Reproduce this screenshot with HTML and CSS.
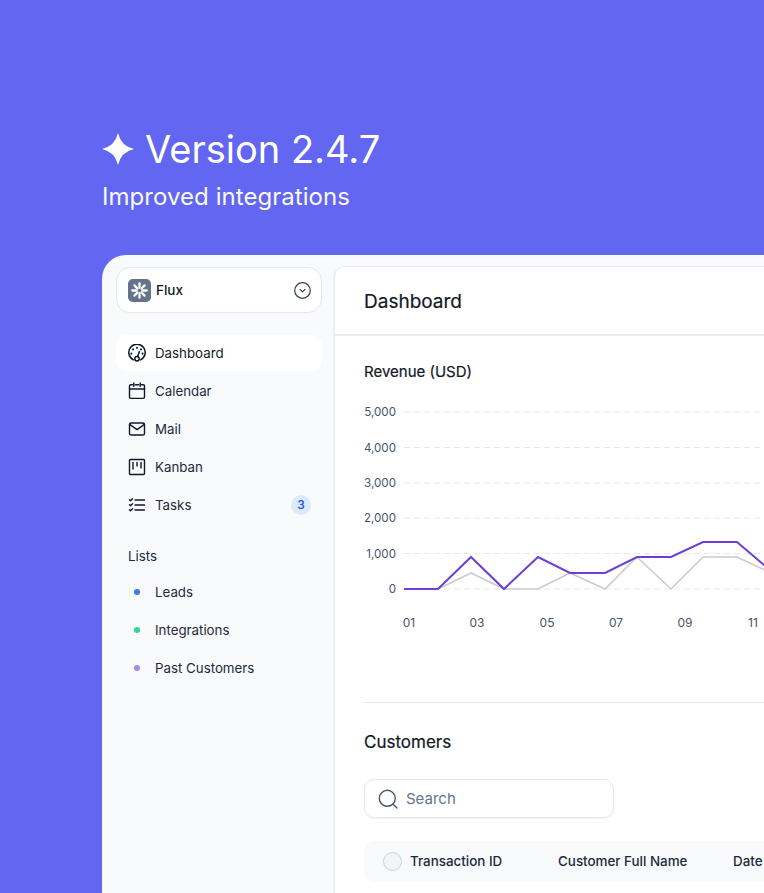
FILE: index.html
```html
<!DOCTYPE html>
<html>
<head>
  <title>Version 2.4.7</title>
  <link rel="stylesheet" href="styles.css">
</head>
<body>
  <header class="hero">
    <h1 class="hero-title">
      <svg class="hero-star" viewBox="0 0 32 32"><path d="M16 0Q19 13 32 16Q19 19 16 32Q13 19 0 16Q13 13 16 0Z" fill="#fff"/></svg>
      Version 2.4.7
    </h1>
    <p class="hero-sub">Improved integrations</p>
  </header>

  <div class="window">
    <aside class="sidebar">
      <div class="workspace">
        <span class="workspace-logo">
          <svg viewBox="0 0 24 24" width="23" height="23"><rect width="24" height="24" rx="5" fill="#64748b"/><g stroke="#fff" stroke-width="2.4" stroke-linecap="round"><path d="M12 4.5V9"/><path d="M12 15v4.5"/><path d="M4.5 12H9"/><path d="M15 12h4.5"/><path d="M6.7 6.7l3.2 3.2"/><path d="M14.1 14.1l3.2 3.2"/><path d="M17.3 6.7l-3.2 3.2"/><path d="M9.9 14.1l-3.2 3.2"/></g></svg>
        </span>
        <span class="workspace-name">Flux</span>
        <svg class="workspace-arrow" viewBox="0 0 17 17" width="17" height="17" fill="none" stroke="#374151" stroke-width="1.2" stroke-linecap="round" stroke-linejoin="round"><circle cx="8.5" cy="8.5" r="7.8"/><path d="M6 7.4l2.5 2.5L11 7.4"/></svg>
      </div>

      <nav class="nav">
        <a class="nav-item active">
          <svg class="nav-icon" viewBox="0 0 18 18" fill="none" stroke="#111827" stroke-width="1.5" stroke-linecap="round" stroke-linejoin="round"><path d="M5.4 15.8A8.2 8.2 0 1 1 12.6 15.8"/><circle cx="9" cy="14.8" r="2.2"/><path d="M9.6 12.6L11.4 7.6"/><path d="M9 3.6v.3" stroke-width="1.9"/><path d="M5.1 5.2v.3" stroke-width="1.9"/><path d="M12.9 5.2v.3" stroke-width="1.9"/><path d="M3.4 9.4v.3" stroke-width="1.9"/><path d="M14.6 9.4v.3" stroke-width="1.9"/></svg>
          Dashboard
        </a>
        <a class="nav-item">
          <svg class="nav-icon" viewBox="0 0 18 18" fill="none" stroke="#111827" stroke-width="1.4" stroke-linecap="round" stroke-linejoin="round"><path d="M4.5 2.8H2.8a1.3 1.3 0 0 0-1.3 1.3v11a1.3 1.3 0 0 0 1.3 1.3h12.4a1.3 1.3 0 0 0 1.3-1.3v-11a1.3 1.3 0 0 0-1.3-1.3h-1.7"/><path d="M7.3 2.8h3.4"/><path d="M5.8 1v3.4"/><path d="M12.2 1v3.4"/><path d="M1.5 7h15"/></svg>
          Calendar
        </a>
        <a class="nav-item">
          <svg class="nav-icon" viewBox="0 0 18 18" fill="none" stroke="#111827" stroke-width="1.4" stroke-linecap="round" stroke-linejoin="round"><rect x="1.5" y="3" width="15" height="12" rx="1.6"/><path d="M2 4.6L9 9.6L16 4.6"/></svg>
          Mail
        </a>
        <a class="nav-item">
          <svg class="nav-icon" viewBox="0 0 18 18" fill="none" stroke="#111827" stroke-width="1.4" stroke-linecap="round" stroke-linejoin="round"><rect x="1.5" y="1.5" width="15" height="15" rx="1"/><path d="M5 4.5v6.5"/><path d="M9 4.5v3.5"/><path d="M13 4.5v5.5"/></svg>
          Kanban
        </a>
        <a class="nav-item">
          <svg class="nav-icon" viewBox="0 0 18 18" fill="none" stroke="#111827" stroke-width="1.4" stroke-linecap="round" stroke-linejoin="round"><path d="M7 4h9.5"/><path d="M7 9h9.5"/><path d="M7 14h9.5"/><path d="M1.5 3.8l1 1L4.6 2.8"/><path d="M1.5 8.8l1 1l2.1-2"/><path d="M1.5 13.8l1 1l2.1-2"/></svg>
          Tasks
          <span class="badge">3</span>
        </a>
      </nav>

      <div class="list-title">Lists</div>
      <nav class="nav">
        <a class="nav-item"><span class="nav-dot"><i class="dot dot-blue"></i></span>Leads</a>
        <a class="nav-item"><span class="nav-dot"><i class="dot dot-green"></i></span>Integrations</a>
        <a class="nav-item"><span class="nav-dot"><i class="dot dot-purple"></i></span>Past Customers</a>
      </nav>
    </aside>

    <main class="panel">
      <div class="panel-header">Dashboard</div>

      <section class="panel-body">
        <h2 class="chart-title">Revenue (USD)</h2>
        <svg class="chart" width="400" height="245" viewBox="364 395 400 245">
          <g class="grid">
            <path d="M404 412H764"/>
            <path d="M404 447.5H764"/>
            <path d="M404 483H764"/>
            <path d="M404 518H764"/>
            <path d="M404 553.5H764"/>
            <path d="M404 589H764"/>
          </g>
          <g class="y-labels">
            <text x="396" y="416">5,000</text>
            <text x="396" y="452">4,000</text>
            <text x="396" y="487">3,000</text>
            <text x="396" y="522">2,000</text>
            <text x="396" y="558">1,000</text>
            <text x="396" y="593">0</text>
          </g>
          <g class="x-labels">
            <text x="409" y="627">01</text>
            <text x="477" y="627">03</text>
            <text x="547" y="627">05</text>
            <text x="616" y="627">07</text>
            <text x="685" y="627">09</text>
            <text x="753" y="627">11</text>
          </g>
          <polyline class="line-gray" points="438,589 471,573 504,589 538,589 570,573 605,589 637,557 671,589 703,557 737,557 771,573"/>
          <polyline class="line-purple" points="404,589 438,589 471,557 504,589 538,557 570,573 605,573 637,557 671,557 703,542 737,542 771,571"/>
        </svg>

        <div class="divider"></div>

        <h2 class="table-title">Customers</h2>
        <div class="search">
          <svg viewBox="0 0 20 20" width="20" height="20" fill="none" stroke="#475569" stroke-width="1.4" stroke-linecap="round"><circle cx="9.3" cy="9.3" r="8"/><path d="M15.2 15.2L19 19"/></svg>
          <span>Search</span>
        </div>
        <div class="table-head">
          <span class="checkbox"></span>
          <span class="col col-id">Transaction ID</span>
          <span class="col col-name">Customer Full Name</span>
          <span class="col">Date</span>
        </div>
      </section>
    </main>
  </div>
</body>
</html>
```

FILE: styles.css
```css
* {
  box-sizing: border-box;
}

html,
body {
  height: 100%;
}

body {
  margin: 0;
  overflow: hidden;
  font-family: Inter, "Noto Sans", sans-serif;
  background-color: #6366f1;
  color: #111827;
}

.hero {
  height: 255px;
  padding: 124px 0 0 102px;
  color: #fff;
}

.hero-title {
  display: flex;
  align-items: center;
  gap: 11px;
  margin: 0;
  height: 50px;
  font-size: 38px;
  font-weight: 400;
  line-height: 50px;
  white-space: nowrap;
}

.hero-star {
  width: 32px;
  height: 32px;
}

.hero-sub {
  margin: 6px 0 0;
  font-size: 24px;
  line-height: 34px;
  font-weight: 400;
  letter-spacing: 0.05px;
  opacity: 0.96;
}

.window {
  display: flex;
  width: 700px;
  height: 660px;
  margin-left: 102px;
  padding-top: 11px;
  background-color: #f8fafc;
  border-radius: 24px 0 0 0;
}

.sidebar {
  flex: none;
  width: 231px;
  padding: 1px 11px 0 14px;
}

.workspace {
  display: flex;
  align-items: center;
  height: 46px;
  padding: 0 10px 0 11px;
  background-color: #fff;
  border: 1px solid #e2e8f0;
  border-radius: 14px;
}

.workspace-logo {
  display: flex;
  margin-right: 5px;
}

.workspace-name {
  flex: 1;
  padding-bottom: 1px;
  font-size: 13.5px;
  font-weight: 500;
  color: #111827;
}

.nav {
  display: flex;
  flex-direction: column;
  gap: 2px;
}

.sidebar > .nav:first-of-type {
  margin-top: 22px;
}

.nav-item {
  display: flex;
  align-items: center;
  height: 36px;
  padding: 0 11px 1px 12px;
  border-radius: 10px;
  font-size: 13.3px;
  color: #1e293b;
}

.nav-item.active {
  background-color: #fff;
  color: #111827;
}

.nav-icon {
  flex: none;
  width: 18px;
  height: 18px;
  margin-right: 9px;
}

.nav-dot {
  flex: none;
  display: flex;
  justify-content: center;
  width: 18px;
  margin-right: 9px;
}

.dot {
  width: 6px;
  height: 6px;
  border-radius: 50%;
}

.dot-blue {
  background-color: #3b7be8;
}

.dot-green {
  background-color: #34d399;
}

.dot-purple {
  background-color: #a78bea;
}

.badge {
  width: 20px;
  height: 20px;
  margin-left: auto;
  border-radius: 50%;
  background-color: #dbeafe;
  color: #1d4ed8;
  font-size: 12px;
  font-weight: 500;
  line-height: 20px;
  text-align: center;
}

.list-title {
  margin: 25px 0 0 12px;
  height: 17px;
  font-size: 13.3px;
  line-height: 17px;
  color: #1e293b;
}

.list-title + .nav {
  margin-top: 9px;
}

.panel {
  flex: 1;
  background-color: #fff;
  border-top: 1px solid #e8eaee;
  border-left: 2px solid #eceef1;
  border-radius: 12px 0 0 0;
}

.panel-header {
  height: 69px;
  padding-left: 29px;
  border-bottom: 2px solid #eceef1;
  font-size: 19px;
  font-weight: 400;
  line-height: 69px;
  -webkit-text-stroke: 0.2px #111827;
  color: #111827;
}

.panel-body {
  padding-left: 29px;
}

.chart-title {
  margin: 0;
  padding-top: 27px;
  height: 59px;
  font-size: 15px;
  font-weight: 400;
  line-height: 18px;
  -webkit-text-stroke: 0.2px #111827;
  color: #111827;
}

.chart {
  display: block;
}

.grid path {
  stroke: #e2e8f0;
  stroke-width: 1;
  stroke-dasharray: 6 4;
  fill: none;
}

.y-labels text {
  font-size: 11.6px;
  fill: #475569;
  text-anchor: end;
}

.x-labels text {
  font-size: 12px;
  fill: #475569;
  text-anchor: middle;
}

.line-gray {
  fill: none;
  stroke: #c9cbd2;
  stroke-width: 1.6;
}

.line-purple {
  fill: none;
  stroke: #6d3fd9;
  stroke-width: 2;
}

.divider {
  margin-top: 62px;
  height: 1px;
  background-color: #e5e7eb;
}

.table-title {
  margin: 29px 0 0;
  height: 21px;
  font-size: 17px;
  font-weight: 400;
  line-height: 21px;
  -webkit-text-stroke: 0.2px #111827;
  color: #111827;
}

.search {
  display: flex;
  align-items: center;
  gap: 8px;
  width: 250px;
  height: 39px;
  margin-top: 26px;
  padding: 0 13px;
  background-color: #fff;
  border: 1px solid #e2e8f0;
  border-radius: 10px;
  box-shadow: 0 1px 2px rgba(0, 0, 0, 0.05);
  font-size: 15px;
  color: #64748b;
}

.table-head {
  display: flex;
  align-items: center;
  height: 41px;
  margin-top: 23px;
  padding: 0 0 1px 19px;
  background-color: #f8fafc;
  border-radius: 10px 0 0 10px;
  font-size: 13.4px;
  font-weight: 500;
  color: #1e293b;
  white-space: nowrap;
}

.checkbox {
  flex: none;
  width: 19px;
  height: 19px;
  margin-right: 8px;
  background-color: #f3f4f6;
  border: 1.5px solid #cfd2d8;
  border-radius: 50%;
}

.col-id {
  width: 148px;
}

.col-name {
  width: 175px;
}
```
